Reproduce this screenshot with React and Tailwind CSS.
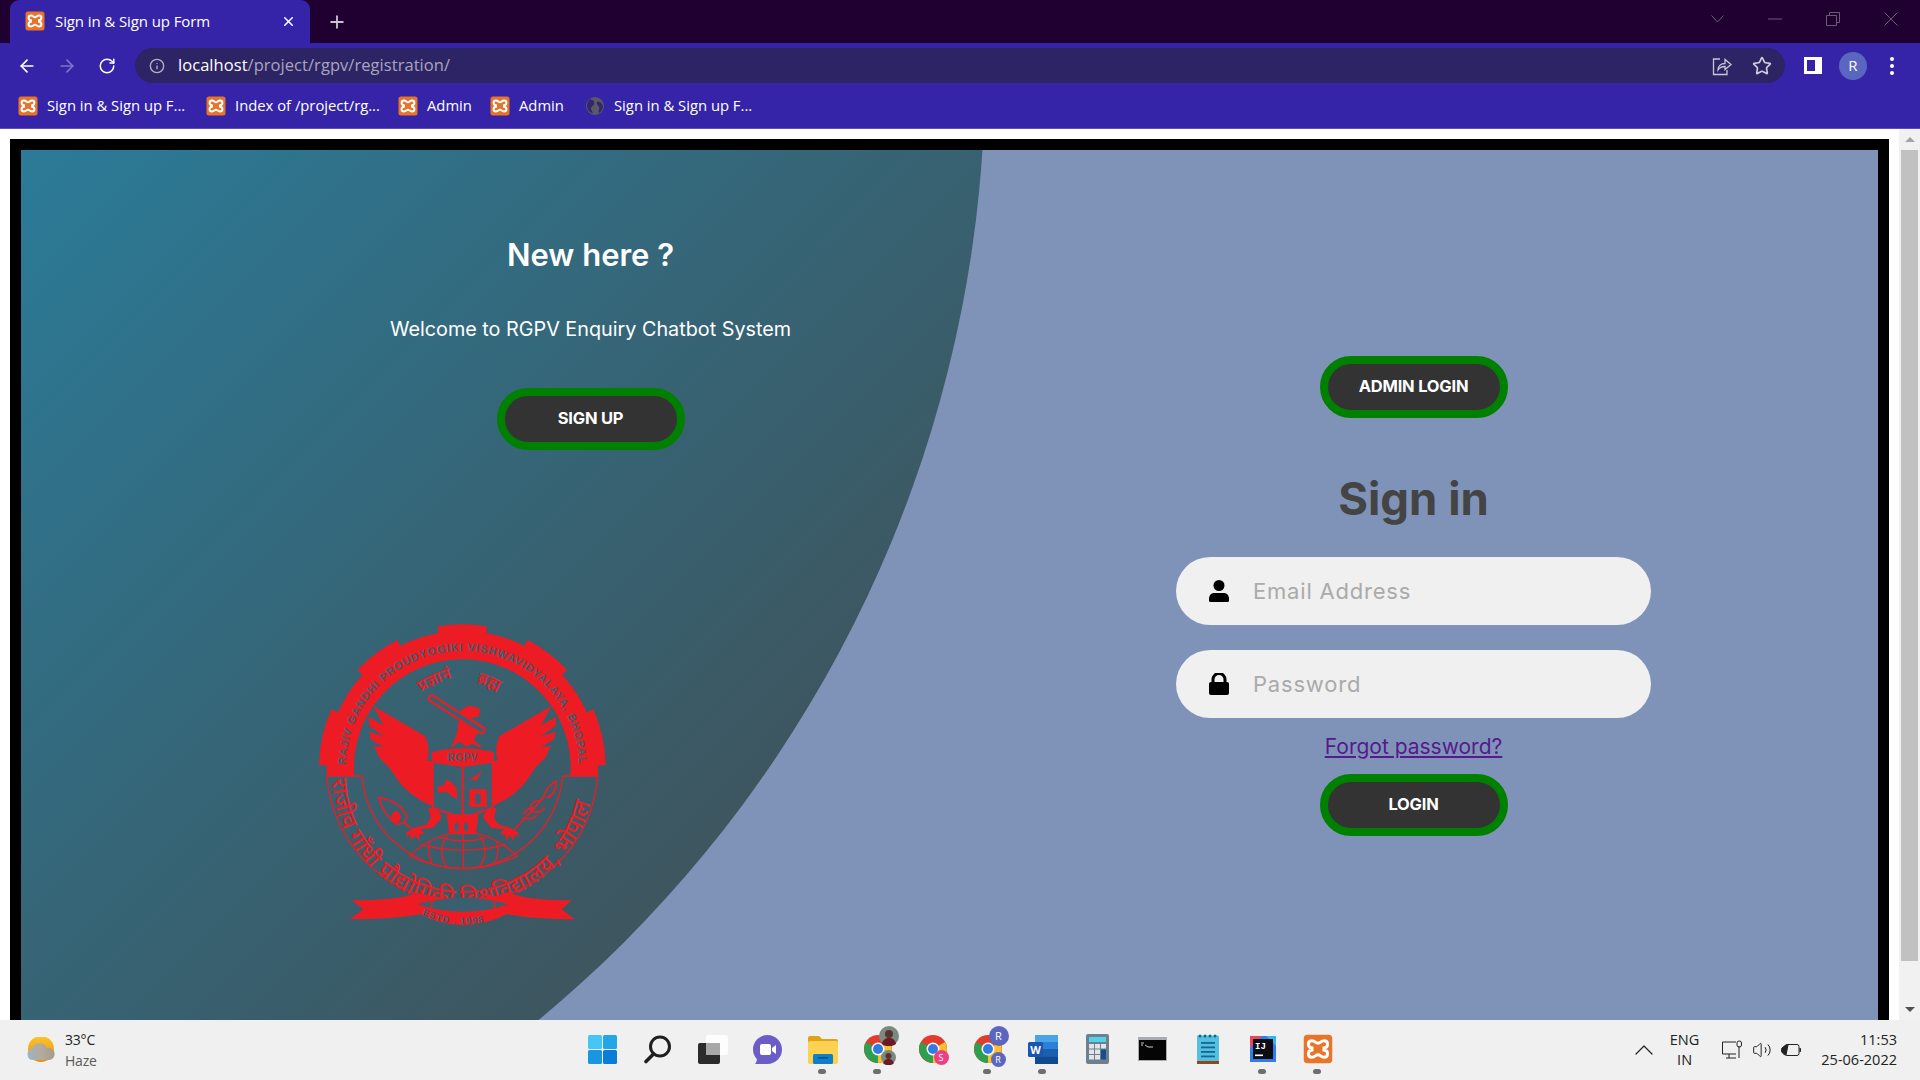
import React from "react";
import { ArrowLeft, ArrowRight, RotateCw, Info, Star, Plus, X, ChevronUp, Volume2 } from "lucide-react";

const Xampp = ({ size = 20 }) => (
  <svg width={size} height={size} viewBox="0 0 20 20" className="shrink-0">
    <rect x="0.5" y="0.5" width="19" height="19" rx="2.5" fill="#e8742a" />
    <path
      d="M6 4.5C2.8 4.5 2.8 9 6 9.3L6 10.7C2.8 11 2.8 15.5 6 15.5C8 15.5 8.5 13.8 10 13.8C11.5 13.8 12 15.5 14 15.5C17.2 15.5 17.2 11 14 10.7L14 9.3C17.2 9 17.2 4.5 14 4.5C12 4.5 11.5 6.2 10 6.2C8.5 6.2 8 4.5 6 4.5Z"
      fill="none"
      stroke="#fff"
      strokeWidth="2"
    />
  </svg>
);

const Globe = () => (
  <svg width="20" height="20" viewBox="0 0 20 20" className="shrink-0">
    <circle cx="10" cy="10" r="9" fill="#5a5a66" />
    <path d="M5 3c3 1 5 2 4 5s-3 2-3 5l2 4c-3 0-6-3-6-7 0-3 1-5 3-7ZM12 6c3-1 5 1 6 4 0 3-2 6-4 7-1-3 1-4 0-6s-3-3-2-5Z" fill="#35256f" />
  </svg>
);

const Chrome = ({ children }) => (
  <div className="relative w-[30px] h-[30px]">
    <svg width="30" height="30" viewBox="0 0 30 30">
      <circle cx="15" cy="15" r="14" fill="#e33b2e" />
      <path d="M15 15L27 8A14 14 0 0 1 15 29Z" fill="#fbc02d" />
      <path d="M15 15L15 29A14 14 0 0 1 3 8Z" fill="#2e9e4f" />
      <circle cx="15" cy="15" r="6.5" fill="#fff" />
      <circle cx="15" cy="15" r="5" fill="#2f7de1" />
    </svg>
    {children}
  </div>
);

const PhotoBadge = ({ className }) => (
  <svg viewBox="0 0 20 20" className={className}>
    <circle cx="10" cy="10" r="10" fill="#7a8a80" />
    <circle cx="10" cy="8" r="4" fill="#5a3328" />
    <path d="M3 18c1-5 4-6 7-6s6 1 7 6c-4 3-10 3-14 0Z" fill="#6b1a28" />
  </svg>
);

const RBadge = ({ className, text }) => (
  <div className={`absolute rounded-full bg-[#5b66c0] text-white flex items-center justify-center font-['Open_Sans',sans-serif] ${text} ${className}`}>
    R
  </div>
);

const taskbarIcons = [
  {
    dot: false,
    icon: (
      <svg width="29" height="29" viewBox="0 0 29 29">
        <rect width="14" height="14" rx="1.5" fill="#45c6f5" />
        <rect x="15" width="14" height="14" rx="1.5" fill="#23a6e8" />
        <rect y="15" width="14" height="14" rx="1.5" fill="#1a95e0" />
        <rect x="15" y="15" width="14" height="14" rx="1.5" fill="#0a7dd6" />
      </svg>
    ),
  },
  {
    dot: false,
    icon: (
      <svg width="29" height="29" viewBox="0 0 29 29" fill="none" stroke="#1f1f1f">
        <circle cx="17" cy="11.5" r="9.5" strokeWidth="3" />
        <path d="M10.5 19L3 26.5" strokeWidth="3.6" strokeLinecap="round" />
      </svg>
    ),
  },
  {
    dot: false,
    icon: (
      <svg width="30" height="29" viewBox="0 0 30 29">
        <rect x="0" y="8" width="22" height="21" rx="2" fill="#2b2b2b" />
        <rect x="8" y="0" width="22" height="20" rx="2" fill="#ffffff" opacity="0.85" />
        <rect x="8" y="8" width="14" height="12" fill="#a8a8a8" />
      </svg>
    ),
  },
  {
    dot: false,
    icon: (
      <svg width="29" height="29" viewBox="0 0 29 29">
        <path d="M14.5 0C22.5 0 29 6.500 29 14.500S22.500 29 14.500 29H2C3.500 27 4 25.500 3.800 24C1.500 21.500 0 18.200 0 14.500C0 6.500 6.500 0 14.500 0Z" fill="#6a5dc8" />
        <rect x="7" y="9" width="11" height="11" rx="2" fill="#fff" />
        <path d="M19 13L23 10V19L19 16Z" fill="#fff" />
      </svg>
    ),
  },
  {
    dot: true,
    icon: (
      <svg width="30" height="29" viewBox="0 0 30 29">
        <path d="M0 3a2 2 0 0 1 2-2h9l3 3h14a2 2 0 0 1 2 2v3H0Z" fill="#e0a21a" />
        <rect y="6" width="30" height="23" rx="2" fill="#fcd250" />
        <rect x="5" y="19" width="20" height="10" rx="1.500" fill="#0f80c8" />
        <rect x="10" y="22" width="10" height="1.600" fill="#074e86" />
      </svg>
    ),
  },
  {
    dot: true,
    icon: (
      <Chrome>
        <PhotoBadge className="absolute -right-[6px] -top-[8px] w-[20px] h-[20px]" />
        <PhotoBadge className="absolute right-[-3px] bottom-[-1px] w-[15px] h-[15px]" />
      </Chrome>
    ),
  },
  {
    dot: false,
    icon: (
      <Chrome>
        <div className="absolute -right-[1px] bottom-[-1px] w-[15px] h-[15px] rounded-full bg-[#ee3f80] text-white text-[9px] flex items-center justify-center font-['Open_Sans',sans-serif]">
          S
        </div>
      </Chrome>
    ),
  },
  {
    dot: true,
    icon: (
      <Chrome>
        <RBadge className="-right-[6px] -top-[8px] w-[20px] h-[20px]" text="text-[11px]" />
        <RBadge className="right-[-3px] bottom-[-3px] w-[15px] h-[15px]" text="text-[9px]" />
      </Chrome>
    ),
  },
  {
    dot: true,
    icon: (
      <svg width="30" height="29" viewBox="0 0 30 29">
        <rect x="7" y="0" width="23" height="29" rx="1.500" fill="#2a7fd6" />
        <rect x="7" y="0" width="23" height="7" fill="#4ba3e8" />
        <rect x="7" y="14" width="23" height="7.500" fill="#1b5fae" />
        <rect x="7" y="21.500" width="23" height="7.500" fill="#124a90" />
        <rect x="0" y="7" width="15" height="15" rx="1.500" fill="#1a56b0" />
        <text x="7.500" y="18.500" textAnchor="middle" fontSize="11" fontWeight="700" fill="#fff" fontFamily="Open Sans">W</text>
      </svg>
    ),
  },
  {
    dot: false,
    icon: (
      <svg width="23" height="30" viewBox="0 0 23 30">
        <rect width="23" height="30" rx="2" fill="#6f7f8c" />
        <rect x="3" y="3" width="17" height="5" fill="#4fd3ef" />
        {[10, 15.500, 21].map((y) => (
          <g key={y}>
            <rect x="3" y={y} width="5" height="4.500" fill="#dfe5ea" />
            <rect x="9" y={y} width="5" height="4.500" fill="#dfe5ea" />
          </g>
        ))}
        <rect x="15" y="10" width="5" height="4.500" fill="#dfe5ea" />
        <rect x="15" y="15.500" width="5" height="10" fill="#164f8c" />
      </svg>
    ),
  },
  {
    dot: false,
    icon: (
      <svg width="29" height="24" viewBox="0 0 29 24">
        <rect width="29" height="24" fill="#a9adb2" />
        <rect x="1" y="3" width="27" height="20" fill="#050505" />
        <path d="M3 6h3M3 8h2M7 8l3 2h5" stroke="#ccc" strokeWidth="1" fill="none" />
      </svg>
    ),
  },
  {
    dot: false,
    icon: (
      <svg width="22" height="30" viewBox="0 0 22 30">
        <rect y="1.500" width="22" height="26" rx="1" fill="#55bfe2" />
        <rect y="27" width="22" height="3" fill="#8c4a1a" />
        {[3, 8, 13, 18].map((x) => (
          <circle key={x} cx={x} cy="2" r="1.500" fill="#14688c" />
        ))}
        {[8, 12.500, 17, 21.500].map((y) => (
          <rect key={y} x="4" y={y} width="14" height="1.800" fill="#14688c" />
        ))}
      </svg>
    ),
  },
  {
    dot: true,
    icon: (
      <svg width="26" height="26" viewBox="0 0 26 26">
        <rect width="26" height="26" fill="#2f7de8" />
        <path d="M0 0H12L0 12Z" fill="#e8475a" />
        <path d="M26 0V10L16 0Z" fill="#32b4f0" />
        <rect x="3" y="3" width="20" height="20" fill="#0c0c14" />
        <text x="5" y="13" fontSize="9" fontWeight="700" fill="#fff" fontFamily="Liberation Mono">IJ</text>
        <rect x="5" y="18.500" width="8" height="1.600" fill="#fff" />
      </svg>
    ),
  },
  { dot: true, icon: <Xampp size={30} /> },
];

const bookmarks = [
  { label: "Sign in & Sign up F...", w: "w-[139px]" },
  { label: "Index of /project/rg...", w: "w-[143px]" },
  { label: "Admin", w: "w-[43px]" },
  { label: "Admin", w: "w-[46px]" },
  { label: "Sign in & Sign up F...", w: "w-[139px]", globe: true },
];

const Emblem = () => {
  const red = "#ed1c24";
  const bg = "#3a606f";
  const arc = (deg1, deg2, r) => {
    const p = (d) => [487 + r * Math.sin((d * Math.PI) / 180), 470 - r * Math.cos((d * Math.PI) / 180)];
    const [a, b] = p(deg1);
    const [c, d] = p(deg2);
    return `M${a} ${b}A${r} ${r} 0 0 1 ${c} ${d}`;
  };
  const wing =
    "M220 285L375 375Q392 410 382 450L398 450L398 585L385 580Q330 555 295 510L268 470L238 440L222 405L250 408L212 385L207 362L250 375L208 345L206 318L250 342Z";
  const foot = "M385 590Q420 590 425 620L400 650L360 655L375 668L360 670L355 690L345 672L335 688L328 668L322 680L318 665L345 650L380 640L392 620Z";
  return (
    <svg viewBox="0 0 960 990" className="w-[320px] h-[330px]">
      <defs>
        <path id="rgpv-top" d="M137 470A350 350 0 0 1 837 470" />
        <path id="rgpv-bottom" d="M95 490A392 392 0 0 0 879 490" />
        <path id="rgpv-estd" d="M365 912Q490 968 615 912" />
        <path id="rgpv-motto-l" d="M362 242Q410 215 462 198" />
        <path id="rgpv-motto-r" d="M530 215Q570 225 605 248" />
      </defs>
      <path d="M81 495A407 407 0 1 1 893 495L811 495A325 325 0 1 0 163 495Z" fill={red} />
      {[[-10, 10], [-47, -27], [27, 47], [-89, -66], [66, 89]].map(([a, b]) => (
        <path key={a} d={arc(a, b, 416)} fill="none" stroke={red} strokeWidth="28" />
      ))}
      <text fontFamily="Liberation Sans" fontWeight="700" fontSize="33" fill={bg}>
        <textPath href="#rgpv-top" textLength="1080" startOffset="8">
          RAJIV GANDHI PROUDYOGIKI VISHWAVIDYALAYA, BHOPAL
        </textPath>
      </text>
      <path d="M81 495L186 495A302 302 0 0 0 788 495L893 495A407 407 0 0 1 81 495Z" fill="none" stroke={red} strokeWidth="4" />
      <text fontFamily="Noto Sans Devanagari, Noto Sans, sans-serif" fontWeight="500" fontSize="68" fill={red}>
        <textPath href="#rgpv-bottom" textLength="1130" startOffset="15">
          राजीव गाँधी प्रौद्योगिकी विश्वविद्यालय, भोपाल
        </textPath>
      </text>
      <text fontFamily="Noto Sans Devanagari, Noto Sans, sans-serif" fontSize="48" fontWeight="600" fill={red}>
        <textPath href="#rgpv-motto-l">प्रज्ञानं</textPath>
      </text>
      <text fontFamily="Noto Sans Devanagari, Noto Sans, sans-serif" fontSize="48" fontWeight="600" fill={red}>
        <textPath href="#rgpv-motto-r">ब्रह्म</textPath>
      </text>
      <path d={wing} fill={red} />
      <path d={wing} fill={red} transform="translate(974 0) scale(-1 1)" />
      <path d="M452 410Q472 375 475 340L480 302Q505 272 540 295L538 316L512 322L550 345L528 372L522 388Q535 396 548 412L515 398L498 408L480 392Z" fill={red} />
      <path d="M395 262L545 358" stroke={red} strokeWidth="24" strokeLinecap="round" />
      <path d="M395 262L545 358" stroke={bg} strokeWidth="12" strokeLinecap="round" />
      <path d="M398 425Q487 405 578 425L578 590L488 622L398 590Z" fill={bg} stroke={red} strokeWidth="6" />
      <path d="M398 425Q487 405 578 425L578 455L488 468L398 455Z" fill={red} />
      <text x="488" y="449" textAnchor="middle" fontFamily="Liberation Sans" fontWeight="700" fontSize="30" letterSpacing="2" fill={bg}>RGPV</text>
      <path d="M488 462L488 620" stroke={red} strokeWidth="6" />
      <path d="M412 528L432 522L440 505L452 512L470 530L472 565L462 560L440 542L415 545Z" fill={red} />
      <path d="M505 510L530 490L522 500L548 478L528 510L520 505Z" fill={red} />
      <path d="M508 535H560V588H508ZM526 555A8 8 0 0 1 542 555L542 578H526Z" fill={red} fillRule="evenodd" />
      <path d={foot} fill={red} />
      <path d={foot} fill={red} transform="translate(974 0) scale(-1 1)" />
      <path d="M440 610H535L528 670H448Z" fill={red} />
      <ellipse cx="470" cy="648" rx="6" ry="14" fill={bg} />
      <ellipse cx="498" cy="648" rx="6" ry="14" fill={bg} />
      <g fill="none" stroke={red} strokeWidth="4">
        <path d="M328 735Q490 590 652 735Q490 810 328 735Z" />
        <path d="M360 700Q490 735 620 700M420 680Q490 700 560 680M440 675Q410 720 440 765M390 690Q380 720 395 755M540 675Q570 720 540 765M590 690Q600 720 585 755M490 665L490 770" />
        <path d="M236 560Q300 570 320 615Q318 640 290 640Q250 610 236 560Z" strokeWidth="5" />
        <path d="M312 636L345 660M640 660L730 560M705 590Q680 590 670 610M722 570Q700 565 690 590M690 600Q720 610 735 590M670 620Q700 630 710 610" strokeWidth="5" />
        <path d="M730 560Q740 525 768 510Q770 550 738 562" strokeWidth="5" />
      </g>
      <ellipse cx="288" cy="618" rx="14" ry="18" fill={red} />
      <path d="M350 845Q490 880 630 845Q680 868 815 868L785 895L825 925Q700 925 620 910Q490 975 360 910Q280 925 150 925L190 895L155 868Q300 868 350 845Z" fill={red} />
      <path d="M352 880Q490 840 625 880Q490 925 352 880Z" fill={bg} />
      <path d="M398 862L392 898M580 862L586 898" stroke={red} strokeWidth="4" />
      <text fontFamily="Liberation Sans" fontWeight="700" fontSize="28" letterSpacing="3" fill={bg}>
        <textPath href="#rgpv-estd">ESTD . 1998</textPath>
      </text>
    </svg>
  );
};

const GreenButton = ({ children }) => (
  <button className="w-[188px] h-[62px] pb-[2px] rounded-[31px] border-[8px] border-[#008000] bg-[#333333] text-white text-[16.500px] font-bold font-['Inter',sans-serif] tracking-[-0.2px]">
    {children}
  </button>
);

const Field = ({ icon, label }) => (
  <div className="w-[475px] h-[68px] rounded-[34px] bg-[#f0f0f0] flex items-center pl-[33px]">
    <div className="w-[20px] flex justify-center">{icon}</div>
    <span className="ml-[24px] text-[22px] tracking-[0.8px] text-[#aaaaaa] font-['Inter',sans-serif]">{label}</span>
  </div>
);

export default function App() {
  return (
    <div className="w-screen h-screen overflow-hidden flex flex-col bg-white font-['Open_Sans',sans-serif]">
      {/* tab strip */}
      <div className="h-[43px] bg-[#1f0030] flex items-end shrink-0 pl-[10px]">
        <div className="w-[300px] h-[43px] rounded-t-[9px] bg-[#3524a7] flex items-center pl-[15px] pr-[14px] pb-[1px]">
          <Xampp />
          <span className="ml-[10px] text-[15px] tracking-[-0.1px] text-white">Sign in &amp; Sign up Form</span>
          <X size={15} className="ml-auto text-white" strokeWidth={2.5} />
        </div>
        <div className="h-[43px] flex items-center ml-[17px]">
          <Plus size={20} className="text-[#c9c4d0]" strokeWidth={2.2} />
        </div>
        <div className="ml-auto h-[43px] flex items-center pb-[6px] text-[#6b5b78]">
          <svg width="13" height="8" viewBox="0 0 13 8" fill="none" stroke="currentColor" className="mr-[44px]">
            <path d="M.5.5l6 6.500 6-6.500" />
          </svg>
          <svg width="14" height="2" viewBox="0 0 14 2" stroke="currentColor" className="mr-[44px]">
            <path d="M0 1h14" />
          </svg>
          <svg width="14" height="14" viewBox="0 0 14 14" fill="none" stroke="currentColor" className="mr-[44px]">
            <path d="M.5 3.500h10v10H.5zM3.500 3.500V.5h10v10h-3" />
          </svg>
          <svg width="14" height="14" viewBox="0 0 14 14" stroke="currentColor" className="mr-[22px]">
            <path d="M.5.5l13 13M13.500.5l-13 13" />
          </svg>
        </div>
      </div>

      {/* address bar */}
      <div className="h-[40px] bg-[#3524a7] flex items-center shrink-0 pt-[5px]">
        <ArrowLeft size={20} className="ml-[17px] text-white" />
        <ArrowRight size={20} className="ml-[20px] text-[#7f74c8]" />
        <RotateCw size={18} className="ml-[21px] text-white" />
        <div className="ml-[19px] w-[1650px] h-[35px] rounded-full bg-[#2d2466] flex items-center pl-[14px] pr-[13px]">
          <Info size={16} className="text-[#b5b2c4]" />
          <span className="ml-[13px] text-[16.500px] tracking-[0.05px] text-white">
            localhost<span className="text-[#a9a6ba]">/project/rgpv/registration/</span>
          </span>
          <svg width="20" height="20" viewBox="0 0 20 20" fill="none" stroke="#c8c6d2" strokeWidth="1.300" className="ml-auto">
            <path d="M8 3H1.500V18.500H15V14" />
            <path d="M6 14C6 10 9 7.500 13 7.500V3.500L19 8.500L13 13.500V10.500C10 10.500 7.500 11.500 6 14Z" />
          </svg>
          <Star size={20} className="ml-[20px] text-[#d0ced8]" strokeWidth={2} />
        </div>
        <div className="ml-[19px] w-[18px] h-[17px] bg-white flex items-center pl-[3px]">
          <div className="w-[8px] h-[11px] bg-[#3524a7]" />
        </div>
        <div className="ml-[17px] w-[28px] h-[28px] rounded-full bg-[#5b66c0] text-white text-[15px] flex items-center justify-center">
          R
        </div>
        <div className="ml-[23px] flex flex-col gap-[3px]">
          <div className="w-[4px] h-[4px] rounded-full bg-white" />
          <div className="w-[4px] h-[4px] rounded-full bg-white" />
          <div className="w-[4px] h-[4px] rounded-full bg-white" />
        </div>
      </div>

      {/* bookmarks */}
      <div className="h-[46px] bg-[#3524a7] border-b border-[#5a4cc0] flex items-center pl-[18px] gap-[20px] shrink-0">
        {bookmarks.map((b, i) => (
          <div key={i} className="flex items-center gap-[9px]">
            {b.globe ? <Globe /> : <Xampp />}
            <span className={`${b.w} text-[14.800px] text-white whitespace-nowrap`}>{b.label}</span>
          </div>
        ))}
      </div>

      {/* page */}
      <div className="flex-1 min-h-0 flex overflow-hidden">
        <div className="flex-1 pl-[10px] pr-[10px] pt-[10px] overflow-hidden">
          <div className="h-[1000px] border-[11px] border-black">
            <div className="relative h-full bg-[#7f93b8] overflow-hidden flex">
              <div className="absolute left-[-1500px] top-[-1311px] w-[2464px] h-[2464px] rounded-full bg-[linear-gradient(135deg,#2b7b98_57%,#3d5660_85%)]" />
              <div className="relative w-[1139px] flex flex-col items-center pt-[82px]">
                <h3 className="text-[31px] leading-[46px] font-semibold text-white font-['Inter',sans-serif]">New here ?</h3>
                <p className="mt-[36px] text-[19.800px] leading-[30px] text-white font-['Inter',sans-serif]">Welcome to RGPV Enquiry Chatbot System</p>
                <div className="mt-[44px]">
                  <GreenButton>SIGN UP</GreenButton>
                </div>
                <div className="self-start ml-[279px] mt-[161px]">
                  <Emblem />
                </div>
              </div>
              <div className="relative w-[507px] flex flex-col items-center pt-[206px]">
                <GreenButton>ADMIN LOGIN</GreenButton>
                <h2 className="mt-[48px] text-[45.500px] leading-[66px] font-bold text-[#444444] font-['Inter',sans-serif]">Sign in</h2>
                <div className="mt-[25px] flex flex-col gap-[25px]">
                  <Field
                    label="Email Address"
                    icon={
                      <svg width="20" height="22" viewBox="0 0 20 22">
                        <circle cx="10" cy="5.500" r="5.500" fill="#000" />
                        <path d="M0 19C0 15 2.500 13 5 13H15C17.500 13 20 15 20 19V20.500A1.500 1.500 0 0 1 18.500 22H1.500A1.500 1.500 0 0 1 0 20.500Z" fill="#000" />
                      </svg>
                    }
                  />
                  <Field
                    label="Password"
                    icon={
                      <svg width="20" height="22" viewBox="0 0 20 22">
                        <path d="M4 9V6.500a6 6 0 0 1 12 0V9" fill="none" stroke="#000" strokeWidth="3" />
                        <rect y="9" width="20" height="13" rx="2" fill="#000" />
                      </svg>
                    }
                  />
                </div>
                <a href="#" className="mt-[14px] text-[21px] leading-[30px] text-[#551a8b] underline font-['Inter',sans-serif]">
                  Forgot password?
                </a>
                <div className="mt-[12px]">
                  <GreenButton>LOGIN</GreenButton>
                </div>
              </div>
            </div>
          </div>
        </div>
        {/* scrollbar */}
        <div className="w-[21px] bg-[#f1f1f1] flex flex-col items-center">
          <div className="h-[21px] flex items-center justify-center">
            <div className="w-0 h-0 border-x-[5px] border-x-transparent border-b-[5px] border-b-[#a3a3a3]" />
          </div>
          <div className="w-[17px] h-[811px] bg-[#c1c1c1]" />
          <div className="mt-auto h-[21px] flex items-center justify-center">
            <div className="w-0 h-0 border-x-[5px] border-x-transparent border-t-[5px] border-t-[#505050]" />
          </div>
        </div>
      </div>

      {/* taskbar */}
      <div className="relative h-[60px] bg-[#f0f0f0] flex items-center shrink-0">
        <div className="flex items-center pl-[26px]">
          <svg width="30" height="26" viewBox="0 0 30 26">
            <defs>
              <linearGradient id="sun" x1="0" y1="0" x2="0" y2="1">
                <stop offset="0" stopColor="#fbc62a" />
                <stop offset="1" stopColor="#ee8a12" />
              </linearGradient>
              <linearGradient id="cloud" x1="0" y1="0" x2="1" y2="0">
                <stop offset="0" stopColor="#9db4c6" />
                <stop offset="0.5" stopColor="#b3ab9c" />
                <stop offset="1" stopColor="#a39c90" />
              </linearGradient>
            </defs>
            <circle cx="15" cy="12" r="13" fill="url(#sun)" />
            <path d="M7 23a5.500 5.500 0 0 1-1-10.900a8 8 0 0 1 15-1a6 6 0 0 1 3 11.900Z" fill="url(#cloud)" />
          </svg>
          <div className="ml-[9px] text-[14px] leading-[21px] tracking-[-0.2px]">
            <div className="text-[#222222]">33°C</div>
            <div className="text-[#5a5a5a]">Haze</div>
          </div>
        </div>
        <div className="absolute left-[575px] top-0 h-[60px] flex">
          {taskbarIcons.map((item, i) => (
            <div key={i} className="relative w-[55px] h-[60px] flex items-center justify-center pb-[2px]">
              {item.icon}
              {item.dot && <div className="absolute bottom-[6px] left-[23px] w-[8px] h-[5px] rounded-full bg-[#6e6e6e]" />}
            </div>
          ))}
        </div>
        <div className="ml-auto flex items-center pr-[23px] text-[#222222]">
          <ChevronUp size={32} strokeWidth={0.9} />
          <div className="ml-[10px] text-[14.500px] leading-[20px] text-center">
            <div>ENG</div>
            <div>IN</div>
          </div>
          <svg width="22" height="20" viewBox="0 0 22 20" fill="none" stroke="#222" className="ml-[22px]">
            <path d="M15 2H1.500V14H15M5 18H15M8 14V18M18 6V18" />
            <rect x="16" y="1" width="4.500" height="6" rx="2" />
          </svg>
          <Volume2 size={20} strokeWidth={1.200} className="ml-[9px]" />
          <svg width="20" height="14" viewBox="0 0 20 14" fill="none" stroke="#222" className="ml-[9px]">
            <rect x="4" y="1.500" width="14" height="11" rx="2" />
            <path d="M0 7C1 4 4 2 7 2L5 12C3 12 1 10 0 7Z" fill="#222" />
            <path d="M18.500 5.500h1v3h-1" fill="#222" />
          </svg>
          <div className="ml-[20px] text-[14.500px] leading-[20px] text-right">
            <div>11:53</div>
            <div>25-06-2022</div>
          </div>
        </div>
      </div>
    </div>
  );
}
